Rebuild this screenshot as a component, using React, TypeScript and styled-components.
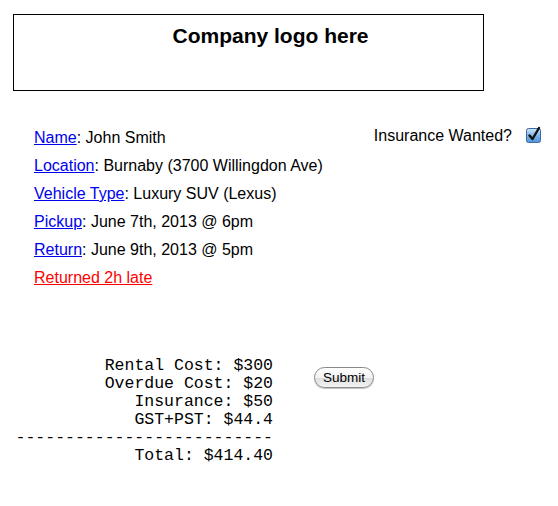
import React from "react";
import styled, { createGlobalStyle } from "styled-components";

const GlobalStyle = createGlobalStyle`
  html, body {
    margin: 0;
    padding: 0;
    background: #fff;
  }
  body {
    font-family: "Liberation Sans", Arial, sans-serif;
    color: #000;
  }
`;

const Page = styled.div`
  width: 558px;
  height: 506px;
  padding-top: 14px;
  box-sizing: border-box;
`;

const LogoBox = styled.header`
  margin-left: 13px;
  width: 471px;
  height: 77px;
  box-sizing: border-box;
  border: 1px solid #000;
  padding: 9px 0 0 44px;
  text-align: center;
`;

const LogoTitle = styled.h1`
  margin: 0;
  font-size: 21px;
  font-weight: 700;
  line-height: 24px;
`;

const Details = styled.section`
  display: flex;
  justify-content: space-between;
  align-items: flex-start;
  margin-top: 38px;
  padding: 0 16px 0 34px;
`;

const InfoList = styled.ul`
  list-style: none;
  margin: 0;
  padding: 0;
  display: flex;
  flex-direction: column;
  gap: 10px;
`;

const InfoRow = styled.li`
  font-size: 16px;
  line-height: 18px;
  white-space: nowrap;
`;

const FieldLink = styled.a<{ $alert?: boolean }>`
  color: ${({ $alert }) => ($alert ? "#ff0000" : "#0000ee")};
  text-decoration: underline;
`;

const Insurance = styled.label`
  display: flex;
  align-items: center;
  gap: 14px;
  margin-top: -2px;
  font-size: 16px;
  line-height: 18px;
`;

const CheckIcon = styled.svg`
  display: block;
  margin-top: -3px;
`;

const CostSection = styled.section`
  display: flex;
  align-items: flex-start;
  gap: 41px;
  margin-top: 70px;
  padding-left: 15px;
`;

const CostSheet = styled.div`
  width: 258px;
  font-family: "Liberation Mono", "Courier New", monospace;
  font-size: 16.5px;
  line-height: 18px;
  text-align: right;
  white-space: pre;
`;

const SubmitButton = styled.button`
  margin-top: 10px;
  width: 60px;
  height: 21px;
  padding: 0 0 1px;
  border: 1px solid #8a8a8a;
  border-radius: 11px;
  background: linear-gradient(#ffffff 0%, #f2f2f2 50%, #dcdcdc 51%, #f4f4f4 100%);
  box-shadow: 0 1px 1px rgba(0, 0, 0, 0.25);
  font-family: "Liberation Sans", Arial, sans-serif;
  font-size: 13.5px;
  color: #000;
`;

const details = [
  { label: "Name", value: "John Smith" },
  { label: "Location", value: "Burnaby (3700 Willingdon Ave)" },
  { label: "Vehicle Type", value: "Luxury SUV (Lexus)" },
  { label: "Pickup", value: "June 7th, 2013 @ 6pm" },
  { label: "Return", value: "June 9th, 2013 @ 5pm" },
];

const costs = [
  "Rental Cost: $300",
  "Overdue Cost: $20",
  "Insurance: $50",
  "GST+PST: $44.4",
  "--------------------------",
  "Total: $414.40",
];

const CheckedBox = () => (
  <CheckIcon width="16" height="17" viewBox="0 0 16 17">
    <defs>
      <linearGradient id="cb" x1="0" y1="0" x2="0" y2="1">
        <stop offset="0" stopColor="#cfe6fb" />
        <stop offset="0.5" stopColor="#7fb6ea" />
        <stop offset="1" stopColor="#4f93dc" />
      </linearGradient>
    </defs>
    <rect x="0.5" y="2.5" width="14" height="14" rx="2" fill="url(#cb)" stroke="#3f6a9c" />
    <path d="M3.5 9.5 L6.5 13 L13 2" fill="none" stroke="#111" strokeWidth="2.4" strokeLinecap="round" strokeLinejoin="round" />
  </CheckIcon>
);

export default function App() {
  return (
    <Page>
      <GlobalStyle />
      <LogoBox>
        <LogoTitle>Company logo here</LogoTitle>
      </LogoBox>

      <Details>
        <InfoList>
          {details.map((d) => (
            <InfoRow key={d.label}>
              <FieldLink href="#">{d.label}</FieldLink>: {d.value}
            </InfoRow>
          ))}
          <InfoRow>
            <FieldLink href="#" $alert>
              Returned 2h late
            </FieldLink>
          </InfoRow>
        </InfoList>
        <Insurance>
          Insurance Wanted?
          <CheckedBox />
        </Insurance>
      </Details>

      <CostSection>
        <CostSheet>{costs.join("\n")}</CostSheet>
        <SubmitButton type="button">Submit</SubmitButton>
      </CostSection>
    </Page>
  );
}
